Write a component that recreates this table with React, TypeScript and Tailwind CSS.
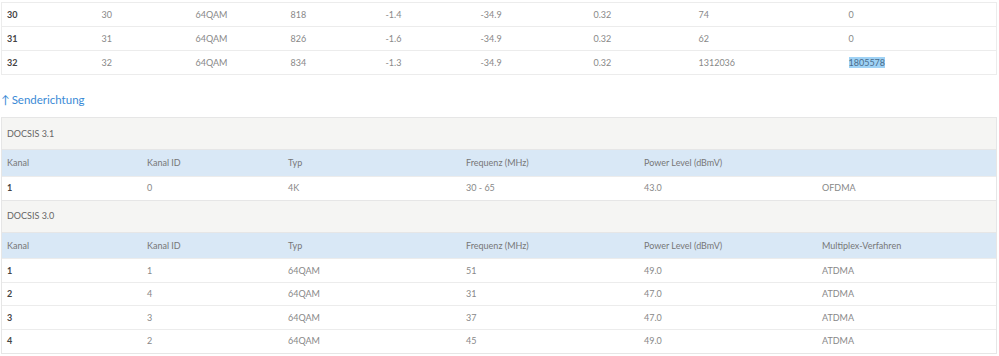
import React from "react";

const font = { fontFamily: "Lato, 'Open Sans', sans-serif" };

const topRows = [
  ["30", "30", "64QAM", "818", "-1.4", "-34.9", "0.32", "74", "0"],
  ["31", "31", "64QAM", "826", "-1.6", "-34.9", "0.32", "62", "0"],
  ["32", "32", "64QAM", "834", "-1.3", "-34.9", "0.32", "1312036", "1805578"],
];
const topWidths = ["w-[95px]", "w-[94px]", "w-[95px]", "w-[95px]", "w-[95px]", "w-[113px]", "w-[105px]", "w-[150px]", ""];

const upWidths = ["w-[140px]", "w-[141px]", "w-[178px]", "w-[178px]", "w-[178px]", ""];

const headers31 = ["Kanal", "Kanal ID", "Typ", "Frequenz (MHz)", "Power Level (dBmV)", ""];
const rows31 = [["1", "0", "4K", "30 - 65", "43.0", "OFDMA"]];

const headers30 = ["Kanal", "Kanal ID", "Typ", "Frequenz (MHz)", "Power Level (dBmV)", "Multiplex-Verfahren"];
const rows30 = [
  ["1", "1", "64QAM", "51", "49.0", "ATDMA"],
  ["2", "4", "64QAM", "31", "47.0", "ATDMA"],
  ["3", "3", "64QAM", "37", "47.0", "ATDMA"],
  ["4", "2", "64QAM", "45", "49.0", "ATDMA"],
];

function Panel({ title, headers, rows }: { title: string; headers: string[]; rows: string[][] }) {
  return (
    <div className="border border-[#e6e6e6]">
      <div className="h-[32px] bg-[#f5f5f3] px-[5px] flex items-center text-[9px] text-[#666] border-b border-[#e6e6e6]">
        {title}
      </div>
      <table className="w-full table-fixed border-collapse text-[9px]">
        <colgroup>
          {upWidths.map((w, i) => (
            <col key={i} className={w} />
          ))}
        </colgroup>
        <thead>
          <tr className="h-[26px] bg-[#d9e8f6] text-[#777]">
            {headers.map((h, i) => (
              <th key={i} className="px-[5px] text-left font-normal">
                {h}
              </th>
            ))}
          </tr>
        </thead>
        <tbody>
          {rows.map((r, ri) => (
            <tr key={ri} className="h-[23.5px] border-t border-[#ececec]">
              {r.map((c, ci) => (
                <td key={ci} className={`px-[5px] ${ci === 0 ? "font-bold text-[#444]" : "text-[#888]"}`}>
                  {c}
                </td>
              ))}
            </tr>
          ))}
        </tbody>
      </table>
    </div>
  );
}

export default function App() {
  return (
    <div className="w-[999px] h-[356px] bg-white overflow-hidden pt-[2px] pl-[1px] pr-[2px]" style={font}>
      <table className="w-full table-fixed border-collapse border border-[#ececec] text-[9px]">
        <colgroup>
          {topWidths.map((w, i) => (
            <col key={i} className={w} />
          ))}
        </colgroup>
        <tbody>
          {topRows.map((r, ri) => (
            <tr key={ri} className="h-[24px] border-t border-[#ececec]">
              {r.map((c, ci) => (
                <td key={ci} className={`px-[5px] ${ci === 0 ? "font-bold text-[#444]" : "text-[#888]"}`}>
                  {ri === 2 && ci === 8 ? <span className="bg-[#9fd2f5] text-[#4a6d8c]">{c}</span> : c}
                </td>
              ))}
            </tr>
          ))}
        </tbody>
      </table>

      <div className="h-[42px] pt-[17px] leading-[16px] text-[11.5px] text-[#3a8ad6]">
        <span className="mr-[2px]">↑</span>Senderichtung
      </div>

      <Panel title="DOCSIS 3.1" headers={headers31} rows={rows31} />
      <div className="-mt-px">
        <Panel title="DOCSIS 3.0" headers={headers30} rows={rows30} />
      </div>
    </div>
  );
}
